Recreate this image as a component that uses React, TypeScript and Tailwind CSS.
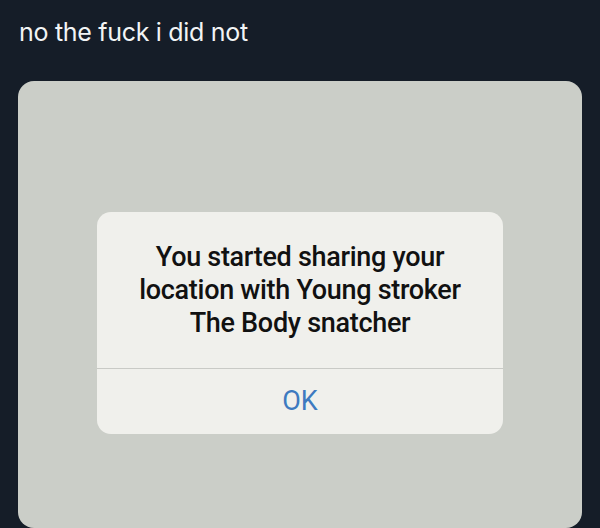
import React from "react";

const App: React.FC = () => {
  return (
    <div
      className="w-[600px] h-[528px] bg-[#151d28] flex flex-col overflow-hidden"
      style={{ fontFamily: "Inter, 'Liberation Sans', sans-serif" }}
    >
      <p className="px-[19px] pt-[16px] text-[25px] leading-[32px] text-[#f2f4f5] tracking-[-0.3px]">
        no the fuck i did not
      </p>

      <div className="mx-[18px] mt-[33px] h-[460px] rounded-[16px] bg-[#cbcec8] flex flex-col items-center pt-[131px]">
        <div className="w-[406px] rounded-[14px] bg-[#f0f0ec] flex flex-col">
          <div
            className="px-2 pt-[29px] pb-[28px] text-center text-[27px] leading-[33px] font-medium text-[#111111] tracking-[-0.3px]"
            style={{ fontFamily: "Roboto, 'Liberation Sans', sans-serif" }}
          >
            You started sharing your
            <br />
            location with Young stroker
            <br />
            The Body snatcher
          </div>
          <div className="h-px bg-[#c9cac6]" />
          <button
            className="h-[65px] text-[27px] text-[#3d7ac0]"
            style={{ fontFamily: "Roboto, 'Liberation Sans', sans-serif" }}
          >
            OK
          </button>
        </div>
      </div>
    </div>
  );
};

export default App;
